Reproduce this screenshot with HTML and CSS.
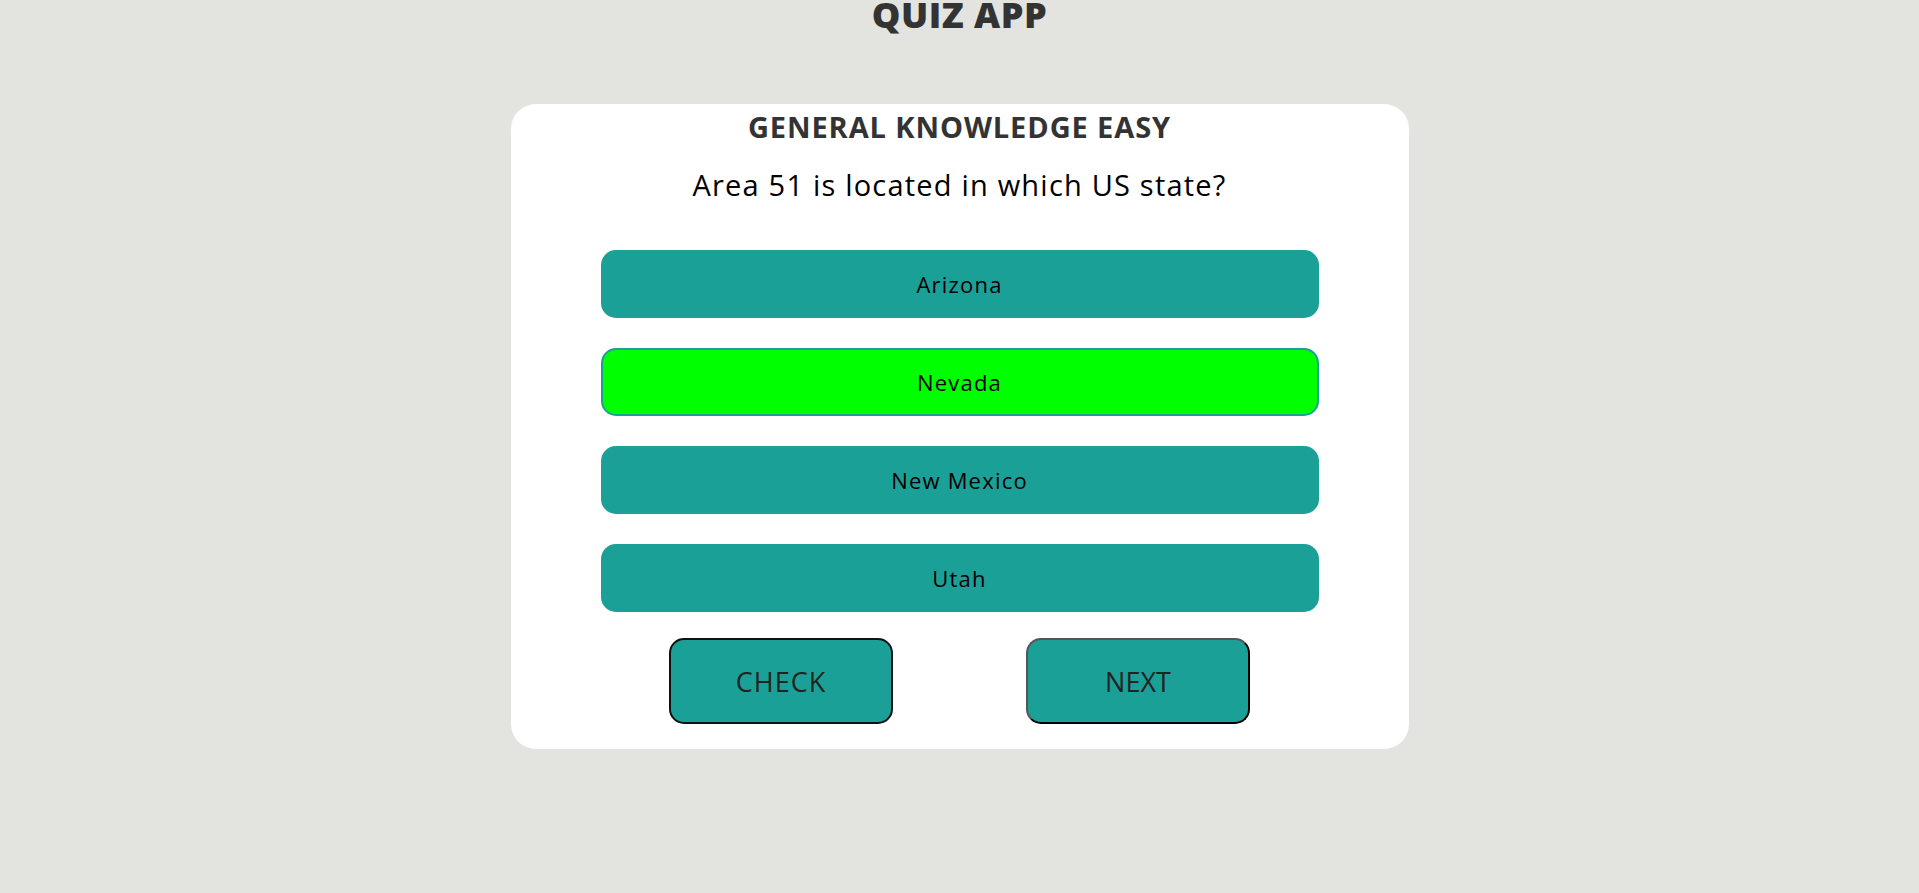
FILE: index.html
```html
<!DOCTYPE html>
<html lang="en">
<head>
<meta charset="utf-8">
<title>Quiz App</title>
<link rel="stylesheet" href="styles.css">
</head>
<body>
<h1 class="app-title">QUIZ APP</h1>
<main class="card">
  <h2 class="category">GENERAL KNOWLEDGE EASY</h2>
  <p class="question">Area 51 is located in which US state?</p>
  <ul class="options">
    <li class="option">Arizona</li>
    <li class="option option-correct">Nevada</li>
    <li class="option">New Mexico</li>
    <li class="option">Utah</li>
  </ul>
  <div class="actions">
    <button class="btn btn-check">CHECK</button>
    <button class="btn btn-next">NEXT</button>
  </div>
</main>
</body>
</html>
```

FILE: styles.css
```css
* { box-sizing: border-box; }
html, body { margin: 0; padding: 0; }
body {
  background: #e3e3df;
  font-family: "Open Sans", "Liberation Sans", sans-serif;
  color: #000;
  height: 893px;
  overflow: hidden;
}
.app-title {
  margin: 0;
  text-align: center;
  font-size: 36px;
  line-height: 30px;
  font-weight: 800;
  color: #333;
  letter-spacing: 0.5px;
  padding-top: 0;
  height: 30px;
}
.card {
  width: 898px;
  height: 645px;
  margin: 74px auto 0;
  background: #fff;
  border-radius: 25px;
  padding-top: 3px;
  display: flex;
  flex-direction: column;
  align-items: center;
}
.category {
  margin: 0;
  font-size: 29px;
  line-height: 40px;
  font-weight: 700;
  color: #333;
  letter-spacing: 0.9px;
}
.question {
  margin: 18px 0 0;
  font-size: 29px;
  line-height: 40px;
  font-weight: 400;
  letter-spacing: 1.2px;
}
.options {
  list-style: none;
  margin: 45px 0 0;
  padding: 0;
  width: 718px;
  display: flex;
  flex-direction: column;
  gap: 30px;
}
.option {
  height: 68px;
  background: #1ba098;
  border-radius: 15px;
  display: flex;
  align-items: center;
  justify-content: center;
  font-size: 22px;
  letter-spacing: 1.2px;
}
.option-correct {
  background: #00ff00;
  border: 2px solid #1ba098;
}
.actions {
  margin-top: 26px;
  display: flex;
  gap: 133px;
  justify-content: center;
}
.btn {
  width: 224px;
  height: 86px;
  background: #1ba098;
  border-radius: 15px;
  font-size: 27px;
  color: #222;
  font-family: "Open Sans", "Liberation Sans", sans-serif;
  padding: 0;
}
.btn-check {
  border: 2px solid #111;
  letter-spacing: 1px;
}
.btn-next {
  border: 2px outset #555;
  border-color: #555 #111 #111 #555;
}
```
